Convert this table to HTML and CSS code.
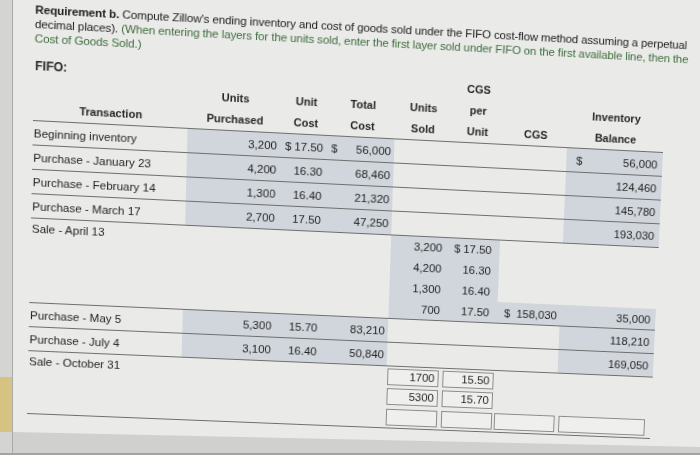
FILE: index.html
```html
<!DOCTYPE html>
<html lang="en">
<head>
<meta charset="utf-8">
<title>FIFO</title>
<link rel="stylesheet" href="styles.css">
</head>
<body>
<div class="screen">
  <div class="strip"><div class="strip-gap"></div><div class="tab"></div></div>
  <div class="sheet">
    <div class="content">
      <p class="intro"><b>Requirement b.</b> Compute Zillow's ending inventory and cost of goods sold under the FIFO cost-flow method assuming a perpetual<br>decimal places). <span class="hint">(When entering the layers for the units sold, enter the first layer sold under FIFO on the first available line, then the</span><br><span class="hint">Cost of Goods Sold.)</span></p>
      <div class="tbl">
        <div class="row head">
          <div class="hc first"><span class="fifo">FIFO:</span><span class="tx">Transaction</span></div>
          <div class="hc">Units<br>Purchased</div>
          <div class="hc">Unit<br>Cost</div>
          <div class="hc">Total<br>Cost</div>
          <div class="hc">Units<br>Sold</div>
          <div class="hc">CGS<br>per<br>Unit</div>
          <div class="hc">CGS</div>
          <div class="hc">Inventory<br>Balance</div>
        </div>
        <div class="row r">
          <div class="lbl">Beginning inventory</div>
          <div class="g up">3,200</div>
          <div class="g uc d"><span>$</span><span>17.50</span></div>
          <div class="g tc d"><span>$</span><span>56,000</span></div>
          <div></div><div></div><div></div>
          <div class="g ib d"><span>$</span><span>56,000</span></div>
        </div>
        <div class="row r">
          <div class="lbl">Purchase - January 23</div>
          <div class="g up">4,200</div>
          <div class="g uc">16.30</div>
          <div class="g tc">68,460</div>
          <div></div><div></div><div></div>
          <div class="g ib">124,460</div>
        </div>
        <div class="row r">
          <div class="lbl">Purchase - February 14</div>
          <div class="g up">1,300</div>
          <div class="g uc">16.40</div>
          <div class="g tc">21,320</div>
          <div></div><div></div><div></div>
          <div class="g ib">145,780</div>
        </div>
        <div class="row r">
          <div class="lbl">Purchase - March 17</div>
          <div class="g up">2,700</div>
          <div class="g uc">17.50</div>
          <div class="g tc">47,250</div>
          <div></div><div></div><div></div>
          <div class="g ib">193,030</div>
        </div>
        <div class="row sale">
          <div class="lbl top">Sale - April 13</div>
          <div class="fill"></div>
          <div class="g us">3,200</div>
          <div class="g pu d"><span>$</span><span>17.50</span></div>
          <div></div><div></div>
          <div class="g us">4,200</div>
          <div class="g pu">16.30</div>
          <div></div><div></div>
          <div class="g us">1,300</div>
          <div class="g pu">16.40</div>
          <div></div><div></div>
          <div class="g us">700</div>
          <div class="g pu">17.50</div>
          <div class="g cg d"><span>$</span><span>158,030</span></div>
          <div class="g ib">35,000</div>
        </div>
        <div class="row r">
          <div class="lbl">Purchase - May 5</div>
          <div class="g up">5,300</div>
          <div class="g uc">15.70</div>
          <div class="g tc">83,210</div>
          <div></div><div></div><div></div>
          <div class="g ib">118,210</div>
        </div>
        <div class="row r">
          <div class="lbl">Purchase - July 4</div>
          <div class="g up">3,100</div>
          <div class="g uc">16.40</div>
          <div class="g tc">50,840</div>
          <div></div><div></div><div></div>
          <div class="g ib">169,050</div>
        </div>
        <div class="row oct">
          <div class="lbl top">Sale - October 31</div>
          <div class="fill"></div>
          <div class="box b-us">1700</div>
          <div class="box b-pu">15.50</div>
          <div></div><div></div>
          <div class="box b-us">5300</div>
          <div class="box b-pu">15.70</div>
          <div></div><div></div>
          <div class="box b-us"></div>
          <div class="box b-pu"></div>
          <div class="box b-cg"></div>
          <div class="box b-ib"></div>
        </div>
      </div>
    </div>
    <div class="bezel"></div>
  </div>
</div>
</body>
</html>
```

FILE: styles.css
```css
html, body {
  margin: 0;
  padding: 0;
}

body {
  width: 700px;
  height: 455px;
  overflow: hidden;
  font-family: "Liberation Sans", Arial, sans-serif;
  color: #1f1f1f;
}

.screen {
  display: flex;
  width: 700px;
  height: 455px;
  box-sizing: border-box;
  border-bottom: 2px solid #a3a3a1;
  background: #cfcfcd;
  overflow: hidden;
}

.strip {
  flex: 0 0 12px;
  border-right: 1px solid #aaaaa8;
  background: #d4d4d2;
  display: flex;
  flex-direction: column;
}

.strip-gap {
  height: 377px;
}

.tab {
  height: 55px;
  background: #d6c283;
}

.sheet {
  flex: 1;
  min-width: 0;
  display: flex;
  flex-direction: column;
  overflow: hidden;
  background: #eaeae8;
}

.content {
  flex: none;
  height: 432px;
  box-sizing: border-box;
  padding: 5.5px 0 0 20px;
  transform-origin: -13px 0;
  transform: matrix3d(1.030972, 0.056799, 0, 0.0000374524,
                      -0.019649, 1.029797, 0, 0.0000405395,
                      0, 0, 1, 0,
                      1.55811, -5.74295, 0, 1);
}

.intro {
  margin: 0;
  font-size: 11.5px;
  line-height: 14px;
  letter-spacing: -0.12px;
  white-space: nowrap;
  color: #1c1c1c;
}

.hint {
  color: #3f6e3f;
}

.tbl {
  margin-top: 10.5px;
  width: 630px;
  font-size: 11.5px;
}

.row {
  display: grid;
  grid-template-columns: 152px 93px 48px 65px 56px 54px 64px 98px;
  border-bottom: 1px solid #6e6e6e;
  box-sizing: border-box;
}

.head {
  height: 64px;
  font-weight: bold;
  font-size: 11px;
  color: #262626;
}

.hc {
  display: flex;
  flex-direction: column;
  justify-content: flex-end;
  align-items: center;
  text-align: center;
  line-height: 21px;
}

.hc.first {
  justify-content: space-between;
  align-items: stretch;
}

.fifo {
  font-size: 12px;
  text-align: left;
  padding-left: 1px;
}

.tx {
  text-align: center;
}

.r {
  height: 24px;
}

.r > div {
  display: flex;
  align-items: center;
}

.lbl {
  padding-left: 1px;
  white-space: nowrap;
}

.sale {
  height: 84px;
  grid-template-rows: repeat(4, 1fr);
}

.oct {
  height: 63px;
  grid-template-rows: repeat(3, 1fr);
}

.sale > div,
.oct > div {
  display: flex;
  align-items: center;
}

.sale .lbl.top {
  grid-row: span 4;
  align-items: flex-start;
  line-height: 20.75px;
}

.oct .lbl.top {
  grid-row: span 3;
  align-items: flex-start;
  line-height: 20.5px;
}

.sale .fill {
  grid-column: span 3;
  grid-row: span 4;
}

.oct .fill {
  grid-column: span 3;
  grid-row: span 3;
}

.g {
  background: #d1d6dc;
  justify-content: flex-end;
}

.g.d {
  justify-content: space-between;
}

.up { padding-right: 4px; }
.uc { padding: 0 6px 0 4px; }
.tc { padding: 0 3px 0 2px; }
.us { padding-right: 4px; }
.pu { padding: 0 8px 0 8px; }
.cg { padding: 0 3px 0 7px; }
.ib { padding: 0 5px 0 10px; }

.oct > .box {
  display: block;
  align-self: center;
  height: 17px;
  box-sizing: border-box;
  border: 1px solid #8b8b8b;
  background: #efefed;
  text-align: right;
  padding-right: 3px;
  line-height: 15px;
}

.b-us { margin: 0 3px 0 1px; }
.b-pu { margin: 0 1px 0 1px; }
.b-cg { margin: 0 1px 0 1px; }
.b-ib { margin: 0 6px 0 3px; }

.bezel {
  flex: none;
  width: 720px;
  height: 40px;
  background: #d0d0ce;
  transform-origin: 0 0;
  transform: rotate(1.25deg);
}
```
